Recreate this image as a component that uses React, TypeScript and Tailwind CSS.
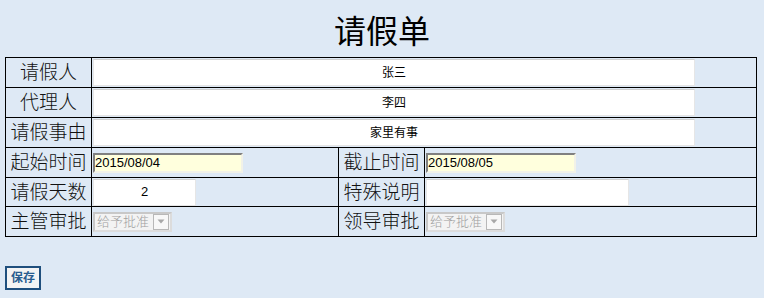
const label =
  "border border-black text-center text-[19px] font-light leading-none text-[#111] whitespace-nowrap px-0";
const cell = "border border-black px-[1px] align-middle";

function GrantSelect() {
  return (
    <div className="flex h-[20px] w-[79px] items-center border-2 border-[#dcdcdc] border-t-[#c8c8c8] border-l-[#c8c8c8] bg-[#f3f3f3]">
      <span className="flex-1 pl-[2px] text-[13px] font-light leading-none text-[#a0a0a0]">给予批准</span>
      <span className="mr-[1px] flex h-[16px] w-[16px] items-center justify-center border border-[#b8b8b8] bg-[#f8f8f8]">
        <svg width="8" height="5" viewBox="0 0 8 5">
          <path d="M0.5 0.5 L7.5 0.5 L4 4.5 Z" fill="#a8a8a8" />
        </svg>
      </span>
    </div>
  );
}

export default function App() {
  return (
    <div
      className="h-[298px] w-[764px] bg-[#dee9f5]"
      style={{ fontFamily: '"Liberation Sans", Arial, "Noto Sans CJK SC", sans-serif' }}
    >
      <h1 className="flex h-[57px] items-center justify-center pt-[6px] text-[32px] font-normal leading-none text-black">
        请假单
      </h1>

      <table className="ml-[5px] w-[751px] table-fixed border-collapse">
        <colgroup>
          <col className="w-[86px]" />
          <col className="w-[247px]" />
          <col className="w-[86px]" />
          <col className="w-[332px]" />
        </colgroup>
        <tbody>
          {[
            ["请假人", "张三"],
            ["代理人", "李四"],
            ["请假事由", "家里有事"],
          ].map(([k, v]) => (
            <tr key={k} className="h-[30px]">
              <td className={label}>{k}</td>
              <td className={cell} colSpan={3}>
                <div className="flex h-[27px] w-[602px] items-center justify-center border border-[#e6e6e6] border-t-[#d0d0d0] bg-white text-[12px] text-black">
                  {v}
                </div>
              </td>
            </tr>
          ))}

          <tr className="h-[30px]">
            <td className={label}>起始时间</td>
            <td className={cell}>
              <div className="flex h-[20px] w-[150px] items-center border-2 border-[#f2f2e8] border-t-[#808080] border-l-[#808080] bg-[#ffffdd] text-[13px] leading-none text-black">
                2015/08/04
              </div>
            </td>
            <td className={label}>截止时间</td>
            <td className={cell}>
              <div className="flex h-[20px] w-[150px] items-center border-2 border-[#f2f2e8] border-t-[#808080] border-l-[#808080] bg-[#ffffdd] text-[13px] leading-none text-black">
                2015/08/05
              </div>
            </td>
          </tr>

          <tr className="h-[29px]">
            <td className={label}>请假天数</td>
            <td className={cell}>
              <div className="flex h-[27px] w-[103px] items-center justify-center border border-[#e6e6e6] border-t-[#d0d0d0] bg-white text-[13px] text-black">
                2
              </div>
            </td>
            <td className={label}>特殊说明</td>
            <td className={cell}>
              <div className="h-[27px] w-[203px] border border-[#e6e6e6] border-t-[#d0d0d0] bg-white" />
            </td>
          </tr>

          <tr className="h-[30px]">
            <td className={label}>主管审批</td>
            <td className={cell}>
              <GrantSelect />
            </td>
            <td className={label}>领导审批</td>
            <td className={cell}>
              <GrantSelect />
            </td>
          </tr>
        </tbody>
      </table>

      <div className="ml-[5px] mt-[28px]">
        <button
          type="button"
          className="h-[24px] w-[36px] border-2 border-[#1f4f7d] bg-[#f4f4f4] text-[12px] font-bold leading-none text-[#2a5d8f]"
        >
          保存
        </button>
      </div>
    </div>
  );
}
